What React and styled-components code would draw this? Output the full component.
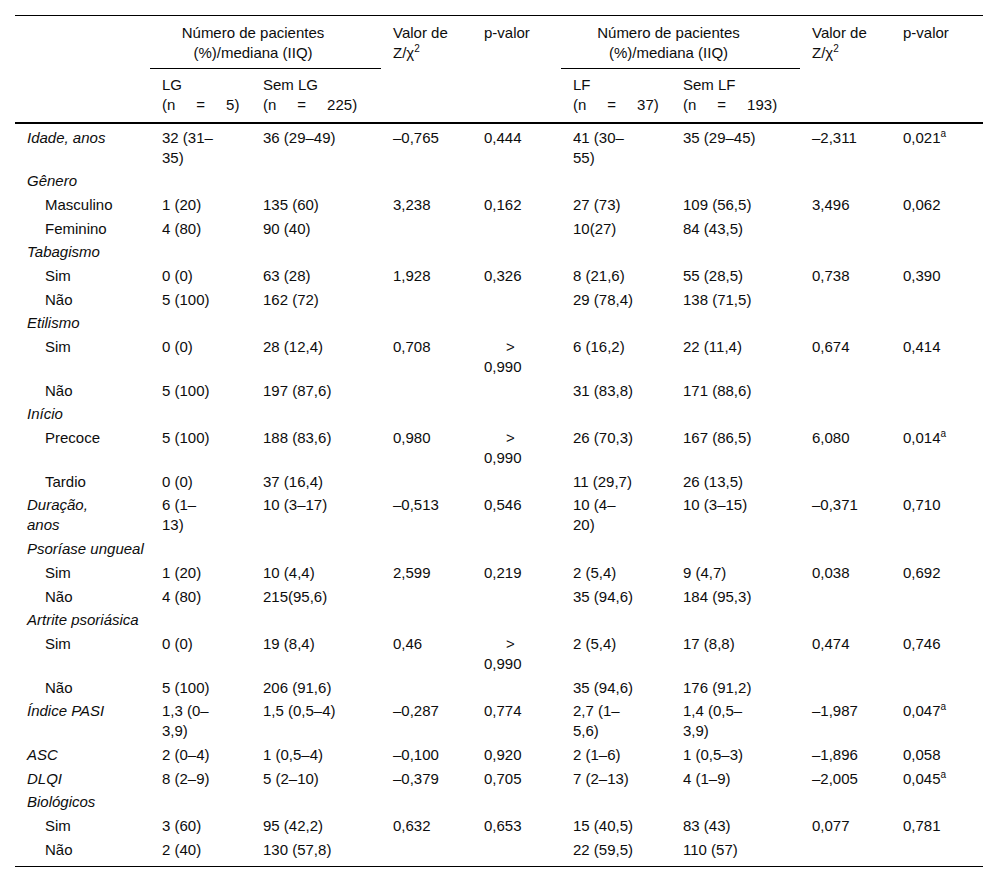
import React from "react";
import styled, { createGlobalStyle } from "styled-components";

const GlobalStyle = createGlobalStyle`
  body {
    margin: 0;
    background: #fff;
    font-family: "Liberation Sans", Arial, sans-serif;
  }
`;

// column widths and right paddings (the right padding decides where a cell wraps)
const colWidths = [135, 101, 130, 91, 89, 110, 129, 91, 92];
const padRight = [30, 37, 12, 6, 29, 36, 41, 6, 6];

const Page = styled.div`
  padding: 15px 17px 15px 15px;
`;

const Table = styled.table`
  border-collapse: collapse;
  table-layout: fixed;
  width: 968px;
  font-size: 15px;
  line-height: 20px;
  color: #0d0d0d;
  border-top: 1px solid #000;
  border-bottom: 1px solid #000;

  thead {
    border-bottom: 2px solid #000;
  }

  tbody tr:first-child td {
    padding-top: 3.5px;
  }

  tbody tr:last-child td {
    padding-bottom: 6px;
  }
`;

const HeadCell = styled.th`
  font-weight: normal;
  text-align: ${(p) => (p.$center ? "center" : "left")};
  vertical-align: top;
  padding: ${(p) => (p.$second ? "6px" : "7px")} ${(p) => padRight[p.$col]}px
    ${(p) => (p.$second ? "7px" : "5px")} 12px;
  border-bottom: ${(p) => (p.$group ? "1px solid #000" : "none")};
`;

const Cell = styled.td`
  vertical-align: top;
  padding: 2px ${(p) => padRight[p.$col]}px 1.7px
    ${(p) => (p.$indent ? 30 : 12)}px;
  font-style: ${(p) => (p.$italic ? "italic" : "normal")};
`;

const CategoryCell = styled.td`
  padding: 2px 12px 1.7px 12px;
  font-style: italic;
`;

const NCount = styled.span`
  display: flex;
  gap: 21px;
  white-space: nowrap;
`;

const Gt = styled.span`
  display: block;
  padding-left: 22px;
`;

const Sup = styled.sup`
  font-size: 10px;
  line-height: 0;
  vertical-align: 6px;
`;

const GT = "GT";

const rows = [
  { label: "Idade, anos", cells: ["32 (31–35)", "36 (29–49)", "–0,765", "0,444", "41 (30–55)", "35 (29–45)", "–2,311", "0,021a"] },
  { cat: "Gênero" },
  { label: "Masculino", sub: true, cells: ["1 (20)", "135 (60)", "3,238", "0,162", "27 (73)", "109 (56,5)", "3,496", "0,062"] },
  { label: "Feminino", sub: true, cells: ["4 (80)", "90 (40)", "", "", "10(27)", "84 (43,5)", "", ""] },
  { cat: "Tabagismo" },
  { label: "Sim", sub: true, cells: ["0 (0)", "63 (28)", "1,928", "0,326", "8 (21,6)", "55 (28,5)", "0,738", "0,390"] },
  { label: "Não", sub: true, cells: ["5 (100)", "162 (72)", "", "", "29 (78,4)", "138 (71,5)", "", ""] },
  { cat: "Etilismo" },
  { label: "Sim", sub: true, cells: ["0 (0)", "28 (12,4)", "0,708", GT, "6 (16,2)", "22 (11,4)", "0,674", "0,414"] },
  { label: "Não", sub: true, cells: ["5 (100)", "197 (87,6)", "", "", "31 (83,8)", "171 (88,6)", "", ""] },
  { cat: "Início" },
  { label: "Precoce", sub: true, cells: ["5 (100)", "188 (83,6)", "0,980", GT, "26 (70,3)", "167 (86,5)", "6,080", "0,014a"] },
  { label: "Tardio", sub: true, cells: ["0 (0)", "37 (16,4)", "", "", "11 (29,7)", "26 (13,5)", "", ""] },
  { label: "Duração, anos", cells: ["6 (1–13)", "10 (3–17)", "–0,513", "0,546", "10 (4–20)", "10 (3–15)", "–0,371", "0,710"] },
  { cat: "Psoríase ungueal" },
  { label: "Sim", sub: true, cells: ["1 (20)", "10 (4,4)", "2,599", "0,219", "2 (5,4)", "9 (4,7)", "0,038", "0,692"] },
  { label: "Não", sub: true, cells: ["4 (80)", "215(95,6)", "", "", "35 (94,6)", "184 (95,3)", "", ""] },
  { cat: "Artrite psoriásica" },
  { label: "Sim", sub: true, cells: ["0 (0)", "19 (8,4)", "0,46", GT, "2 (5,4)", "17 (8,8)", "0,474", "0,746"] },
  { label: "Não", sub: true, cells: ["5 (100)", "206 (91,6)", "", "", "35 (94,6)", "176 (91,2)", "", ""] },
  { label: "Índice PASI", cells: ["1,3 (0–3,9)", "1,5 (0,5–4)", "–0,287", "0,774", "2,7 (1–5,6)", "1,4 (0,5–3,9)", "–1,987", "0,047a"] },
  { label: "ASC", cells: ["2 (0–4)", "1 (0,5–4)", "–0,100", "0,920", "2 (1–6)", "1 (0,5–3)", "–1,896", "0,058"] },
  { label: "DLQI", cells: ["8 (2–9)", "5 (2–10)", "–0,379", "0,705", "7 (2–13)", "4 (1–9)", "–2,005", "0,045a"] },
  { cat: "Biológicos" },
  { label: "Sim", sub: true, cells: ["3 (60)", "95 (42,2)", "0,632", "0,653", "15 (40,5)", "83 (43)", "0,077", "0,781"] },
  { label: "Não", sub: true, cells: ["2 (40)", "130 (57,8)", "", "", "22 (59,5)", "110 (57)", "", ""] },
];

const renderValue = (v) => {
  if (v === GT) {
    return (
      <>
        <Gt>&gt;</Gt>0,990
      </>
    );
  }
  if (v.endsWith("a")) {
    return (
      <>
        {v.slice(0, -1)}
        <Sup>a</Sup>
      </>
    );
  }
  return v;
};

const GroupHead = ({ col }) => (
  <HeadCell colSpan={2} $col={col} $center $group>
    Número de pacientes
    <br />
    (%)/mediana (IIQ)
  </HeadCell>
);

const ValorHead = ({ col }) => (
  <HeadCell rowSpan={2} $col={col}>
    Valor de
    <br />
    Z/χ<Sup>2</Sup>
  </HeadCell>
);

const SubHead = ({ col, name, n }) => (
  <HeadCell $col={col} $second>
    {name}
    <NCount>
      <span>(n</span>
      <span>=</span>
      <span>{n})</span>
    </NCount>
  </HeadCell>
);

const App = () => {
  return (
    <Page>
      <GlobalStyle />
      <Table>
        <colgroup>
          {colWidths.map((w, i) => (
            <col key={i} style={{ width: w }} />
          ))}
        </colgroup>
        <thead>
          <tr>
            <HeadCell rowSpan={2} $col={0} />
            <GroupHead col={1} />
            <ValorHead col={3} />
            <HeadCell rowSpan={2} $col={4}>
              p-valor
            </HeadCell>
            <GroupHead col={5} />
            <ValorHead col={7} />
            <HeadCell rowSpan={2} $col={8}>
              p-valor
            </HeadCell>
          </tr>
          <tr>
            <SubHead col={1} name="LG" n="5" />
            <SubHead col={2} name="Sem LG" n="225" />
            <SubHead col={5} name="LF" n="37" />
            <SubHead col={6} name="Sem LF" n="193" />
          </tr>
        </thead>
        <tbody>
          {rows.map((r, i) =>
            r.cat ? (
              <tr key={i}>
                <CategoryCell colSpan={9}>{r.cat}</CategoryCell>
              </tr>
            ) : (
              <tr key={i}>
                <Cell $col={0} $indent={r.sub} $italic={!r.sub}>
                  {r.label}
                </Cell>
                {r.cells.map((c, j) => (
                  <Cell key={j} $col={j + 1}>
                    {renderValue(c)}
                  </Cell>
                ))}
              </tr>
            )
          )}
        </tbody>
      </Table>
    </Page>
  );
};

export default App;
